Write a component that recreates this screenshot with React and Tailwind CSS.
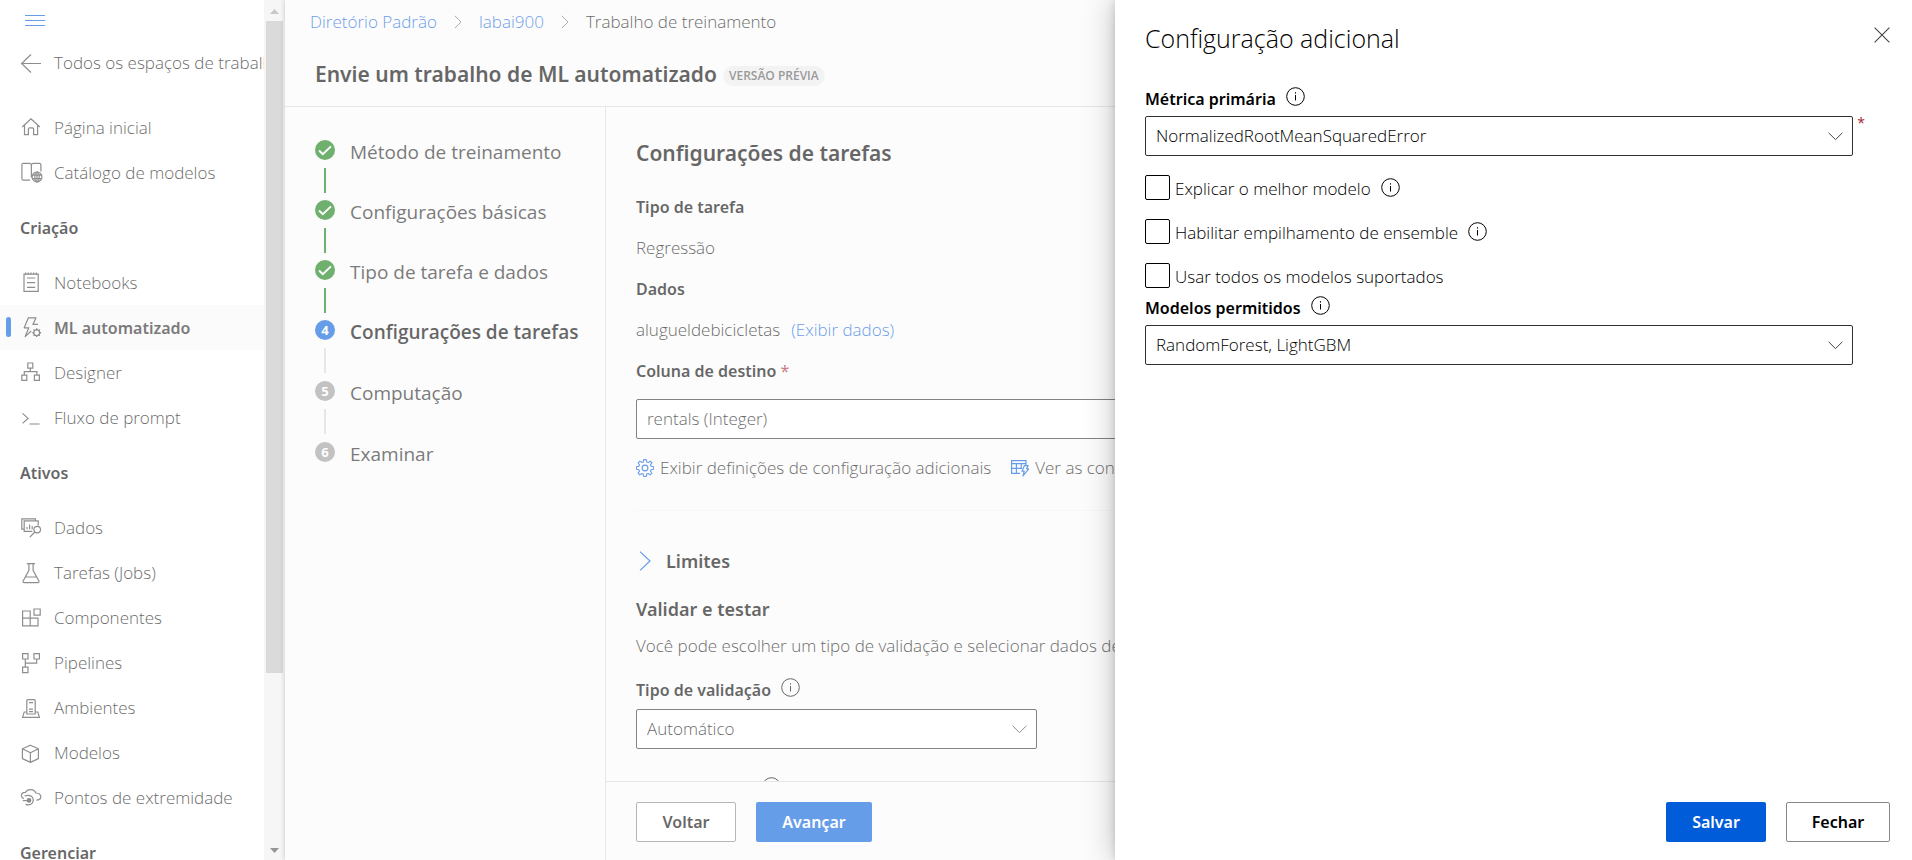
import React from "react";

const Icon = ({ children, className = "" }) => (
  <svg
    aria-hidden="true"
    viewBox="0 0 21 21"
    width="21"
    height="21"
    fill="none"
    stroke="currentColor"
    strokeWidth="1.2"
    className={"shrink-0 overflow-visible " + className}
  >
    {children}
  </svg>
);

const icons = {
  home: (
    <Icon>
      <path d="M2.2 10 11 1.8 19.8 10M4.5 8.2V17.6H8.4V12.2Q8.4 10.9 9.7 10.9H12.3Q13.6 10.9 13.6 12.2V17.6H17.6V8.2" />
    </Icon>
  ),
  catalog: (
    <Icon>
      <path d="M10 18.2H3.4Q1.9 18.2 1.9 16.7V2.8Q1.9 1.3 3.4 1.3H9.6Q11.4 1.3 11.4 3.2V15.4M11.4 3.2Q11.4 1.3 13.2 1.3H19.4Q20.9 1.3 20.9 2.8V9.4" />
      <circle cx="17" cy="14.9" r="4.9" />
      <ellipse cx="17" cy="14.9" rx="2.2" ry="4.9" />
      <path d="M12.4 13.2H21.6M12.4 16.6H21.6M17 10V20" />
    </Icon>
  ),
  notebook: (
    <Icon>
      <path d="M4 2.2H18.2V19.4H4ZM7 6H15.2M7 10.7H15.2M7 15.4H15.2" />
      <path d="M5.6 0.4V2.6M8.3 0.4V2.6M11 0.4V2.6M13.7 0.4V2.6M16.4 0.4V2.6" />
    </Icon>
  ),
  bolt: (
    <Icon>
      <path d="M18 7.4H12.9L16 0.8H8.4L4.2 10.8H8.8L5.2 19.6 11.2 14" strokeLinejoin="round" />
      <circle cx="16.7" cy="15.7" r="2.9" />
      <path
        d="M16.7 11.3V13M16.7 18.4V20.1M12.3 15.7H14M19.4 15.7H21.1M13.6 12.6 14.8 13.8M18.6 17.6 19.8 18.8M13.6 18.8 14.8 17.6M18.6 13.8 19.8 12.6"
        strokeWidth="1.4"
      />
    </Icon>
  ),
  designer: (
    <Icon>
      <path d="M7.8 1H12.8V6.2H7.8ZM1.8 13.2H6.8V18.4H1.8ZM14.4 13.2H19.4V18.4H14.4ZM10.3 6.2V9.6M4.3 13V9.6H16.9V13" />
    </Icon>
  ),
  prompt: (
    <Icon>
      <path d="M2.6 6.4 8 11.4 2.6 16.4M9.4 17H19.6" />
    </Icon>
  ),
  data: (
    <Icon>
      <path d="M4 12.2H1.8V1.8H15.4V3.8M18.2 8.6V3.9H4.2V14.4H12.2M7 12.2V10M9.6 12.2V7.4M12.2 12.2V9" />
      <circle cx="17.2" cy="12.6" r="3.3" />
      <path d="M14.8 15 9.8 20.2" />
    </Icon>
  ),
  flask: (
    <Icon>
      <path
        d="M6.8 1.6H15M8.9 1.6V8.4L3 19.2Q2.8 20.6 4 20.6H18Q19.2 20.6 19 19.2L13.1 8.4V1.6M5.6 15H16.4"
        strokeLinejoin="round"
      />
    </Icon>
  ),
  components: (
    <Icon>
      <path d="M10.2 11.2V4H2.6V18.8H18V11.2H2.6M10.2 11.2V18.8M14 2H20.2V8.2H14Z" />
    </Icon>
  ),
  pipelines: (
    <Icon>
      <path d="M2.6 1.6H8V7H2.6ZM14 1.6H19.4V7H14ZM2.6 15.2H8V20.6H2.6ZM5.3 7V15.2M16.7 7V11.2H5.3" />
    </Icon>
  ),
  environments: (
    <Icon>
      <path d="M6.8 17V3.6Q6.8 2.6 7.8 2.6H14.2Q15.2 2.6 15.2 3.6V17ZM9 5.6H13M9 12.2H13M9 14.6H13M6.8 15H4.2L2.6 20.4H19.4L17.8 15H15.2" />
    </Icon>
  ),
  cube: (
    <Icon>
      <path
        d="M10.4 3.2 18.4 6.8V16.6L10.4 20.4 2.4 16.6V6.8ZM2.4 6.8 10.4 10.8 18.4 6.8M10.4 10.8V20.4"
        strokeLinejoin="round"
      />
    </Icon>
  ),
  endpoint: (
    <Icon>
      <path d="M3.8 11.6Q1.4 10.8 1.4 8.6 1.4 5.6 5.4 5.4 6.8 2.6 10.6 2.6 14.8 2.6 15.8 6 20.8 6.4 20.8 9.8 20.8 13 16.4 13.2" />
      <path d="M4.6 9Q8.6 7.4 11.8 9.6 14.4 12.6 12.4 15.8 9.8 19 5.6 17.4" />
      <circle cx="9" cy="13.4" r="1.8" fill="currentColor" />
      <path d="M2.8 13.6H8" />
    </Icon>
  ),
};

const strong = "font-['Noto_Sans','Open_Sans',sans-serif] text-[16px] leading-6 font-semibold ";

const NavItem = ({ icon, label, active = false }) => (
  <li>
    <a
      href="#"
      aria-current={active ? "page" : undefined}
      className={
        "relative flex h-[45px] items-center gap-[13px] pl-5 whitespace-nowrap " +
        (active ? strong + "bg-[#f8f8f8] text-[#222]" : "")
      }
    >
      {active && <span className="absolute top-3 left-[6px] h-5 w-[5px] rounded-sm bg-[#015cda]" />}
      <span className="text-[#444]">{icons[icon]}</span>
      <span>{label}</span>
    </a>
  </li>
);

const NavHeading = ({ children }) => (
  <h2 className={strong + "flex h-[65px] shrink-0 items-center pl-5"}>{children}</h2>
);

const Sidebar = () => (
  <div className="flex shrink-0 bg-white">
    <nav aria-label="Principal" className="flex w-66 flex-col overflow-hidden">
      <button type="button" aria-label="Menu" className="flex h-[41px] shrink-0 items-center pl-[25px] text-[#015cda]">
        <svg width="20" height="12" viewBox="0 0 20 12" stroke="currentColor" aria-hidden="true">
          <path d="M0 .5H20M0 5.5H20M0 10.5H20" />
        </svg>
      </button>
      <a href="#" className="flex h-[44px] shrink-0 items-center gap-[13px] pl-5 whitespace-nowrap">
        <Icon className="text-[#444]">
          <path d="M21 10.5H1.6M11 1.5 1.6 10.5 11 19.5" />
        </Icon>
        Todos os espaços de trabalho
      </a>
      <ul className="mt-5 shrink-0">
        <NavItem icon="home" label="Página inicial" />
        <NavItem icon="catalog" label="Catálogo de modelos" />
      </ul>
      <NavHeading>Criação</NavHeading>
      <ul className="shrink-0">
        <NavItem icon="notebook" label="Notebooks" />
        <NavItem icon="bolt" label="ML automatizado" active />
        <NavItem icon="designer" label="Designer" />
        <NavItem icon="prompt" label="Fluxo de prompt" />
      </ul>
      <NavHeading>Ativos</NavHeading>
      <ul className="shrink-0">
        <NavItem icon="data" label="Dados" />
        <NavItem icon="flask" label="Tarefas (Jobs)" />
        <NavItem icon="components" label="Componentes" />
        <NavItem icon="pipelines" label="Pipelines" />
        <NavItem icon="environments" label="Ambientes" />
        <NavItem icon="cube" label="Modelos" />
        <NavItem icon="endpoint" label="Pontos de extremidade" />
      </ul>
      <NavHeading>Gerenciar</NavHeading>
    </nav>
    <div aria-hidden="true" className="flex w-[21px] flex-col items-center bg-[#f1f1f1] pr-[2px] pl-[2px]">
      <svg width="9" height="21" viewBox="0 0 9 21" className="shrink-0">
        <path d="M0 14 4.5 9 9 14Z" fill="#a3a3a3" />
      </svg>
      <div className="w-full flex-1">
        <div className="h-[80%] w-full bg-[#c1c1c1]" />
      </div>
      <svg width="9" height="24" viewBox="0 0 9 24" className="shrink-0">
        <path d="M0 12 4.5 17 9 12Z" fill="#505050" />
      </svg>
    </div>
  </div>
);

const Crumb = () => (
  <svg width="8" height="14" viewBox="0 0 8 14" fill="none" stroke="#777" aria-hidden="true">
    <path d="M.8 .8 7 7 .8 13.2" />
  </svg>
);

const steps = [
  { n: 1, label: "Método de treinamento", state: "done" },
  { n: 2, label: "Configurações básicas", state: "done" },
  { n: 3, label: "Tipo de tarefa e dados", state: "done" },
  { n: 4, label: "Configurações de tarefas", state: "current" },
  { n: 5, label: "Computação", state: "todo" },
  { n: 6, label: "Examinar", state: "todo" },
];

const badgeColor = { done: "bg-[#107c10]", current: "bg-[#015cda]", todo: "bg-[#999]" };

const Stepper = () => (
  <ol className="w-[321px] shrink-0 border-r border-[#d8d8d8] pt-[33px] pl-[30px]">
    {steps.map((s, i) => (
      <li
        key={s.n}
        aria-current={s.state === "current" ? "step" : undefined}
        className={"flex gap-[15px] " + (s.state === "done" ? "h-[60px]" : "h-[61px]")}
      >
        <div className="flex flex-col items-center gap-2">
          <span
            className={
              "flex size-5 shrink-0 items-center justify-center rounded-full text-[13px] leading-none font-bold text-white " +
              badgeColor[s.state]
            }
          >
            {s.state === "done" ? (
              <svg width="14" height="11" viewBox="0 0 14 11" fill="none" stroke="#fff" strokeWidth="2" aria-label="Concluído">
                <path d="M1 5.6 4.8 9.2 13 1.4" />
              </svg>
            ) : (
              s.n
            )}
          </span>
          {i < steps.length - 1 && (
            <span className={"h-[25px] w-[2px] " + (s.state === "done" ? "bg-[#107c10]" : "bg-[#d8d8d8]")} />
          )}
        </div>
        <a
          href="#"
          className={"h-6 text-[19px] leading-6 " + (s.state === "current" ? "font-semibold" : "font-normal text-[#222]")}
        >
          {s.label}
        </a>
      </li>
    ))}
  </ol>
);

const Info = () => (
  <button type="button" aria-label="Informações" className="flex size-[19px] shrink-0">
    <svg width="19" height="19" viewBox="0 0 19 19" fill="none" stroke="currentColor" aria-hidden="true">
      <circle cx="9.5" cy="9.5" r="8.8" />
      <path d="M9.5 8V13.5M9.5 5.2V6.6" />
    </svg>
  </button>
);

const Select = ({ id, value, className = "" }) => (
  <div className={"relative " + className}>
    <select
      id={id}
      className="h-10 w-full appearance-none rounded-[2px] border border-[#323130] bg-white pr-10 pl-[10px] text-black"
    >
      <option>{value}</option>
    </select>
    <svg
      width="15"
      height="9"
      viewBox="0 0 15 9"
      fill="none"
      stroke="#444"
      aria-hidden="true"
      className="pointer-events-none absolute top-4 right-[10px]"
    >
      <path d="M.6 .8 7.5 7.6 14.4 .8" />
    </svg>
  </div>
);

const Main = () => (
  <main className="flex min-w-0 flex-1 flex-col bg-[#fafafa] shadow-[0_0_5px_rgba(0,0,0,0.35)]">
    <header className="h-[107px] shrink-0 border-b border-[#d8d8d8]">
      <nav aria-label="Trilha" className="flex h-[43px] items-center gap-[17px] pl-[25px]">
        <a href="#" className="text-[#015cda]">Diretório Padrão</a>
        <Crumb />
        <a href="#" className="text-[#015cda]">labai900</a>
        <Crumb />
        <span>Trabalho de treinamento</span>
      </nav>
      <div className="flex h-[62px] items-center gap-[6px] pl-[30px]">
        <h1 className="font-['Noto_Sans','Open_Sans',sans-serif] text-[21px] leading-7 font-semibold">
          Envie um trabalho de ML automatizado
        </h1>
        <span className="mt-1 rounded-full bg-[#ececec] px-[6px] text-xs leading-5 font-semibold text-[#555]">
          VERSÃO PRÉVIA
        </span>
      </div>
    </header>
    <div className="flex min-h-0 flex-1">
      <Stepper />
      <section className="flex min-w-0 flex-1 flex-col">
        <div className="min-h-0 flex-1 overflow-hidden px-[30px] pt-8">
          <h2 className="font-['Noto_Sans','Open_Sans',sans-serif] text-[21px] leading-7 font-semibold">
            Configurações de tarefas
          </h2>
          <h3 className={strong + "mt-7"}>Tipo de tarefa</h3>
          <p className="mt-[17px]">Regressão</p>
          <h3 className={strong + "mt-[17px]"}>Dados</h3>
          <p className="mt-[17px] flex gap-[11px]">
            alugueldebicicletas
            <a href="#" className="text-[#015cda]">(Exibir dados)</a>
          </p>
          <label htmlFor="target" className={strong + "mt-[17px] block"}>
            Coluna de destino <span className="font-normal text-[#a4262c]">*</span>
          </label>
          <Select id="target" value="rentals (Integer)" className="mt-4" />
          <div className="mt-[17px] flex gap-5 whitespace-nowrap">
            <button type="button" className="flex items-center gap-[6px]">
              <svg width="18" height="18" viewBox="0 0 18 18" fill="none" stroke="#015cda" strokeWidth="1.1" aria-hidden="true">
                <path
                  strokeLinejoin="round"
                  d="M7.7.6H10.3L10.8 3 12.2 3.6 14.2 2.2 15.9 4 14.5 5.9 15.1 7.3 17.5 7.7V10.3L15.1 10.8 14.5 12.2 15.9 14.2 14.1 15.9 12.1 14.5 10.7 15.1 10.3 17.5H7.7L7.2 15.1 5.8 14.5 3.8 15.9 2.1 14.1 3.5 12.1 2.9 10.7.5 10.3V7.7L2.9 7.2 3.5 5.8 2.1 3.8 3.9 2.1 5.9 3.5 7.3 2.9Z"
                />
                <circle cx="9" cy="9" r="2.9" />
              </svg>
              Exibir definições de configuração adicionais
            </button>
            <button type="button" className="flex items-center gap-[6px]">
              <svg width="18" height="18" viewBox="0 0 18 18" fill="none" stroke="#015cda" strokeWidth="1.2" aria-hidden="true">
                <path d="M.6 1.6H15V4.6H.6ZM.6 4.6V14.4H9M.6 9.4H11M5.4 4.6V14.4M10.2 4.6V10M15 4.6V6" />
                <path d="M13.4 6.6H17.2L15.6 9.8H17.8L12 16.8 13.2 12.2H11Z" strokeLinejoin="round" fill="#fafafa" />
              </svg>
              Ver as configurações de definição de recursos
            </button>
          </div>
          <hr className="mt-[30px] border-[#f2f2f2]" />
          <button
            type="button"
            className="mt-[38px] flex items-center gap-[14px] font-['Noto_Sans','Open_Sans',sans-serif] text-[18px] leading-6 font-semibold"
          >
            <svg width="16" height="20" viewBox="0 0 16 20" fill="none" stroke="#015cda" strokeWidth="1.2" aria-hidden="true">
              <path d="M4 .6 14 10 4 19.4" />
            </svg>
            Limites
          </button>
          <h2 className="mt-6 font-['Noto_Sans','Open_Sans',sans-serif] text-[18px] leading-6 font-semibold">
            Validar e testar
          </h2>
          <p className="mt-[13px] whitespace-nowrap">
            Você pode escolher um tipo de validação e selecionar dados de teste opcionais.
          </p>
          <div className="mt-5 flex gap-[10px]">
            <label htmlFor="validation" className={strong}>Tipo de validação</label>
            <Info />
          </div>
          <Select id="validation" value="Automático" className="mt-[7px] w-[401px]" />
          <div className="mt-7 flex gap-[10px]">
            <span className={strong + "pt-2"}>Dados de teste</span>
            <Info />
          </div>
        </div>
        <footer className="flex h-[79px] shrink-0 gap-5 border-t border-[#d8d8d8] px-[30px] pt-5">
          <button type="button" className={strong + "h-10 w-25 rounded-[2px] border border-[#8a8886] bg-white"}>
            Voltar
          </button>
          <button type="button" className={strong + "h-10 w-29 rounded-[2px] bg-[#015cda] text-white"}>
            Avançar
          </button>
        </footer>
      </section>
    </div>
  </main>
);

const Check = ({ id, label, info = false }) => (
  <div className="flex h-[25px] items-center gap-[5px]">
    <input
      id={id}
      type="checkbox"
      className="size-[25px] shrink-0 appearance-none rounded-[2px] border border-black bg-white checked:bg-[#015cda]"
    />
    <label htmlFor={id} className="mr-[5px] pt-[2px]">{label}</label>
    {info && <Info />}
  </div>
);

const Panel = () => (
  <aside
    role="dialog"
    aria-label="Configuração adicional"
    className="absolute inset-y-0 right-0 flex w-[797px] flex-col bg-white pr-[22px] pl-[30px] shadow-[0_0_30px_rgba(0,0,0,0.25),0_0_8px_rgba(0,0,0,0.15)]"
  >
    <header className="flex items-start justify-between pt-[22px]">
      <h2 className="text-[25px] leading-8">Configuração adicional</h2>
      <button type="button" aria-label="Fechar painel" className="mt-[5px] flex size-4 text-[#444]">
        <svg width="16" height="16" viewBox="0 0 16 16" fill="none" stroke="currentColor" strokeWidth="1.1" aria-hidden="true">
          <path d="M.6 .6 15.4 15.4M15.4 .6 .6 15.4" />
        </svg>
      </button>
    </header>
    <div className="flex-1 pr-[37px]">
      <div className="mt-[33px] flex gap-[10px]">
        <label htmlFor="metric" className={strong}>Métrica primária</label>
        <Info />
      </div>
      <div className="relative mt-[5px]">
        <Select id="metric" value="NormalizedRootMeanSquaredError" />
        <span className="absolute top-0 -right-3 text-sm leading-none font-normal text-[#a4262c]">*</span>
      </div>
      <div className="mt-[19px] flex flex-col gap-[19px]">
        <Check id="explain" label="Explicar o melhor modelo" info />
        <Check id="ensemble" label="Habilitar empilhamento de ensemble" info />
        <Check id="all-models" label="Usar todos os modelos suportados" />
      </div>
      <div className="mt-2 flex gap-[10px]">
        <label htmlFor="models" className={strong}>Modelos permitidos</label>
        <Info />
      </div>
      <Select id="models" value="RandomForest, LightGBM" className="mt-[5px]" />
    </div>
    <footer className="flex justify-end gap-5 pb-[18px]">
      <button type="button" className={strong + "h-10 w-25 rounded-[2px] bg-[#015cda] text-white"}>
        Salvar
      </button>
      <button type="button" className={strong + "h-10 w-26 rounded-[2px] border border-[#8a8886] bg-white"}>
        Fechar
      </button>
    </footer>
  </aside>
);

export default function App() {
  return (
    <div className="relative flex h-screen overflow-hidden bg-white font-['Open_Sans','Noto_Sans',sans-serif] text-[17px] leading-6 font-light text-black">
      <Sidebar />
      <Main />
      <div aria-hidden="true" className="absolute inset-0 bg-white/40" />
      <Panel />
    </div>
  );
}
